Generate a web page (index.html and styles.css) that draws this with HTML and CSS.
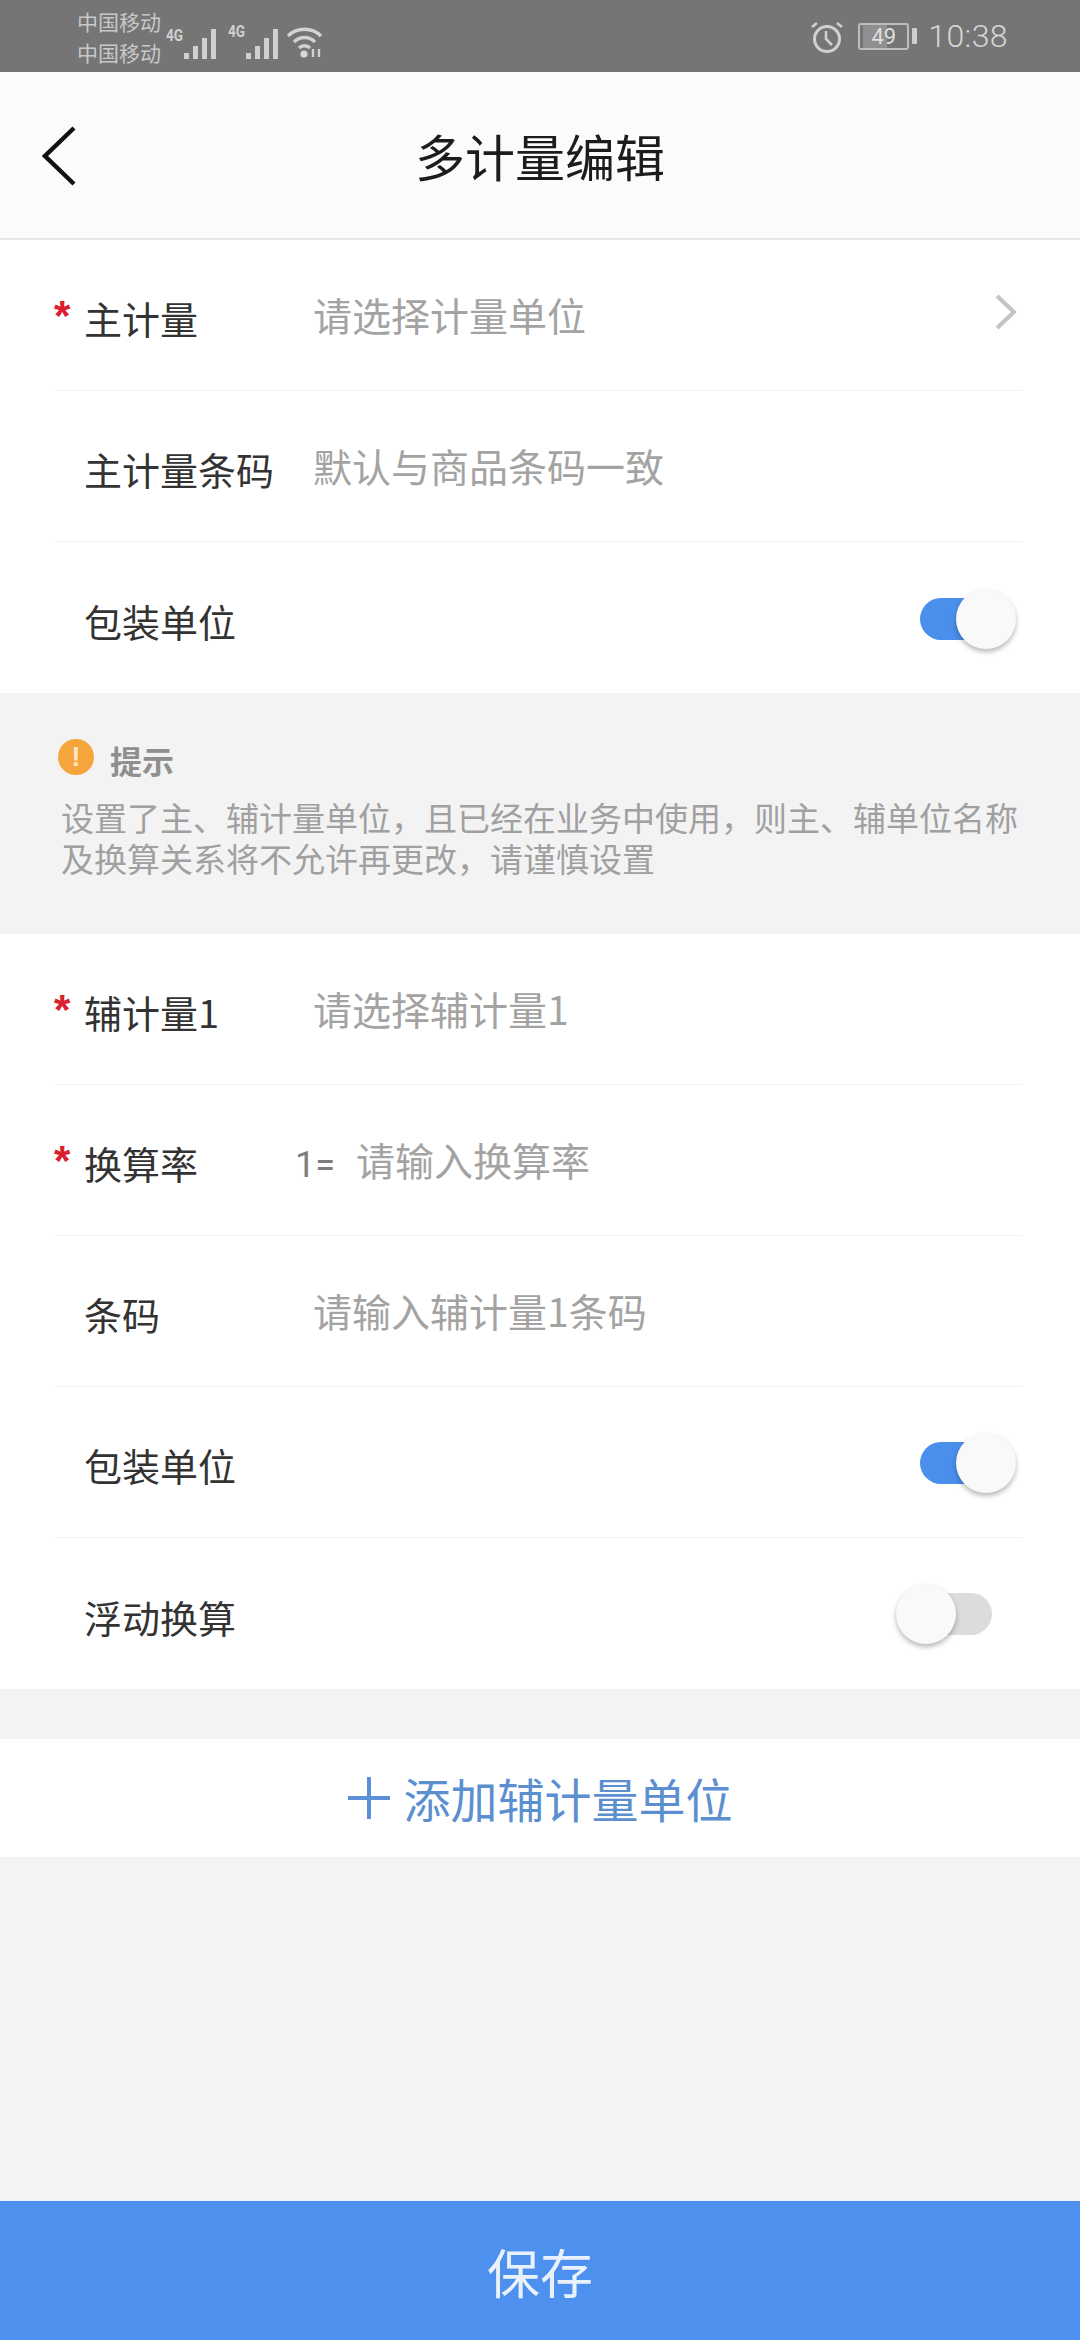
FILE: index.html
```html
<!DOCTYPE html>
<html lang="zh-CN">
<head>
<meta charset="utf-8">
<title>多计量编辑</title>
<link rel="stylesheet" href="styles.css">
</head>
<body>
<div class="page">
  <header class="status">
    <div class="carriers"><span>中国移动</span><span>中国移动</span></div>
    <div class="net">
      <span class="g">4G</span>
      <svg class="bars" width="34" height="34" viewBox="0 0 34 34"><g fill="#cfcfcf"><rect x="0" y="26" width="5" height="6"/><rect x="9" y="19" width="5" height="13"/><rect x="18" y="11" width="5" height="21"/><rect x="27" y="2" width="5" height="30"/></g></svg>
      <span class="g g2">4G</span>
      <svg class="bars" width="34" height="34" viewBox="0 0 34 34"><g fill="#cfcfcf"><rect x="0" y="26" width="5" height="6"/><rect x="9" y="19" width="5" height="13"/><rect x="18" y="11" width="5" height="21"/><rect x="27" y="2" width="5" height="30"/></g></svg>
      <svg class="wifi" width="38" height="36" viewBox="0 0 38 36"><g fill="none" stroke="#d2d2d2" stroke-width="3.4"><path d="M2 12 C11 3 26 3 35 12"/><path d="M8 18 C14 12 23 12 29 18"/><path d="M13 24 C16 21 21 21 24 24"/></g><circle cx="18" cy="30" r="3.6" fill="#d8d8d8"/><path d="M27 33V25M33 33V25" stroke="#d2d2d2" stroke-width="2.4"/></svg>
    </div>
    <div class="status-right">
      <svg class="alarm" width="34" height="34" viewBox="0 0 34 34"><g fill="none" stroke="#d0d0d0" stroke-width="3"><circle cx="17" cy="19" r="12.5"/><path d="M16 11v8l6 6" stroke-width="2.6"/><path d="M2 7l5-4M32 7l-5-4" stroke-width="2.6"/></g></svg>
      <div class="battery"><div class="battery-fill"></div><span class="battery-num">49</span></div>
      <div class="battery-tip"></div>
      <span class="time">10:38</span>
    </div>
  </header>

  <nav class="nav">
    <svg class="back" width="34" height="60" viewBox="0 0 34 60"><path d="M32 2 L3 30 L32 58" fill="none" stroke="#111" stroke-width="4.4"/></svg>
    <h1 class="title">多计量编辑</h1>
  </nav>

  <section class="group">
    <div class="row">
      <span class="star">*</span><span class="label">主计量</span><span class="value">请选择计量单位</span>
      <svg class="chev" width="24" height="38" viewBox="0 0 24 38"><path d="M3 3 L20 19 L3 35" fill="none" stroke="#c4c4c4" stroke-width="4"/></svg>
    </div>
    <div class="row">
      <span class="star"></span><span class="label">主计量条码</span><span class="value">默认与商品条码一致</span>
    </div>
    <div class="row row-last">
      <span class="star"></span><span class="label">包装单位</span>
      <div class="toggle on"><span class="knob"></span></div>
    </div>
  </section>

  <section class="hint">
    <div class="hint-head">
      <span class="hint-icon">!</span><strong class="hint-title">提示</strong>
    </div>
    <p class="hint-text">设置了主、辅计量单位，且已经在业务中使用，则主、辅单位名称<br>及换算关系将不允许再更改，请谨慎设置</p>
  </section>

  <section class="group">
    <div class="row">
      <span class="star">*</span><span class="label">辅计量1</span><span class="value">请选择辅计量1</span>
    </div>
    <div class="row">
      <span class="star">*</span><span class="label label-short">换算率</span><span class="eq">1=</span><span class="value value-eq">请输入换算率</span>
    </div>
    <div class="row">
      <span class="star"></span><span class="label">条码</span><span class="value">请输入辅计量1条码</span>
    </div>
    <div class="row">
      <span class="star"></span><span class="label">包装单位</span>
      <div class="toggle on"><span class="knob"></span></div>
    </div>
    <div class="row row-last">
      <span class="star"></span><span class="label">浮动换算</span>
      <div class="toggle off"><span class="knob"></span></div>
    </div>
  </section>

  <div class="add">
    <svg class="plus" width="42" height="42" viewBox="0 0 42 42"><path d="M21 0V42M0 21H42" stroke="#5b8fd8" stroke-width="4"/></svg>
    <span class="add-text">添加辅计量单位</span>
  </div>

  <button class="save">保存</button>
</div>
</body>
</html>
```
FILE: styles.css
```css
* { box-sizing: border-box; }
html, body { margin: 0; padding: 0; }
body {
  font-family: "Noto Sans CJK SC", "Noto Sans", sans-serif;
  background: #f3f3f3;
}
.page {
  width: 1080px;
  height: 2340px;
  display: flex;
  flex-direction: column;
  background: #f3f3f3;
}

/* status bar */
.status {
  height: 72px;
  flex: none;
  background: #757575;
  display: flex;
  align-items: center;
  padding: 0 72px 0 77px;
  color: #cfcfcf;
}
.carriers {
  display: flex;
  flex-direction: column;
  font-size: 21px;
  line-height: 31px;
  width: 89px;
  margin-top: 2px;
  color: #c8c8c8;
}
.net { display: flex; align-items: flex-start; height: 56px; padding-top: 4px; }
.g { font: bold 16px "Roboto", sans-serif; color: #d0d0d0; width: 17px; margin-top: 16px; transform: scaleX(.85); transform-origin: left; }
.g { margin-top: 14px; }
.g2 { margin-left: 10px; margin-top: 10px; }
.bars { margin-top: 16px; margin-left: 0; }
.net .bars { margin-left: 1px; margin-top: 15px; height: 34px; }
.wifi { margin-left: 6px; margin-top: 12px; }
.status-right { margin-left: auto; display: flex; align-items: center; }
.alarm { margin-right: 14px; margin-top: 1px; }
.battery {
  width: 51px;
  height: 27px;
  border: 2px solid #bdbdbd;
  border-radius: 3px;
  position: relative;
  overflow: hidden;
}
.battery-fill { width: 24px; height: 100%; margin-left: 3px; background: #8f8f8f; }
.battery-num {
  position: absolute;
  inset: 0;
  text-align: center;
  font: 22px/23px "Roboto", sans-serif;
  color: #dedede;
}
.battery-tip { width: 5px; height: 16px; background: #cfcfcf; margin: 0 11px 0 3px; border-radius: 1px; }
.time { font: 300 32px/36px "Roboto", sans-serif; color: #d6d6d6; letter-spacing: .4px; }

/* nav */
.nav {
  height: 168px;
  flex: none;
  background: #fbfbfb;
  border-bottom: 2px solid #e6e6e6;
  display: flex;
  align-items: center;
  justify-content: center;
  position: relative;
}
.back { position: absolute; left: 42px; top: 54px; }
.title { margin: 0; font-size: 50px; line-height: 60px; font-weight: 400; color: #1c1c1c; margin-top: 0; }

/* rows */
.group { background: #fff; padding: 0 58px 0 54px; flex: none; }
.row {
  height: 151px;
  display: flex;
  align-items: center;
  position: relative;
  padding-top: 6px;
  border-bottom: 1px solid #f2f2f2;
}
.row-last { border-bottom: none; }
.star {
  width: 30px;
  flex: none;
  height: 46px;
  font: bold 42px/46px "Liberation Sans", sans-serif;
  color: #d9202c;
  margin-top: -4px;
}
.label { width: 229px; flex: none; font-size: 38px; line-height: 46px; color: #333; }
.label-short { width: 211px; }
.value { font-size: 39px; line-height: 46px; color: #a3a3a3; margin-top: -9px; }
.eq { font: 36px/46px "Roboto", sans-serif; color: #7d7d7d; width: 61px; flex: none; margin-top: 4px; }
.value-eq { font-size: 39px; }
.chev { margin-left: auto; margin-right: 4px; margin-top: -12px; }

/* toggle */
.toggle { margin-left: auto; width: 66px; height: 42px; border-radius: 21px; position: relative; margin-top: -4px; }
.toggle.on { background: #4a8fec; margin-right: 36px; }
.toggle.off { background: #dcdcdc; margin-right: 30px; margin-top: -6px; }
.knob {
  position: absolute;
  top: -9px;
  width: 60px;
  height: 60px;
  border-radius: 50%;
  background: #f9f9f9;
  box-shadow: 0 3px 5px rgba(0, 0, 0, .28);
}
.on .knob { left: 36px; }
.off .knob { left: -30px; }

/* hint */
.hint { height: 241px; flex: none; padding: 47px 40px 0 61px; background: #f3f3f3; }
.hint-head { display: flex; align-items: center; height: 40px; margin-left: -3px; }
.hint-icon {
  width: 36px;
  height: 36px;
  border-radius: 50%;
  background: #f5a53c;
  color: #fbe6c6;
  text-align: center;
  font: bold 28px/36px "Liberation Sans", sans-serif;
  flex: none;
  margin-top: -6px;
}
.hint-title { font-size: 32px; line-height: 40px; color: #8f8f8f; margin-left: 16px; }
.hint-text { margin: 17px 0 0; font-size: 33px; line-height: 41px; color: #a0a0a0; white-space: nowrap; }

/* add */
.add {
  height: 118px;
  flex: none;
  margin-top: 50px;
  background: #fff;
  display: flex;
  align-items: center;
  justify-content: center;
}
.plus { margin-right: 14px; }
.add-text { font-size: 47px; line-height: 60px; color: #5b8fd0; }

/* save */
.save {
  margin-top: auto;
  height: 139px;
  flex: none;
  border: none;
  background: #4d90ee;
  color: #e9f1fc;
  font-family: inherit;
  font-size: 53px;
  padding: 0;
}
```
